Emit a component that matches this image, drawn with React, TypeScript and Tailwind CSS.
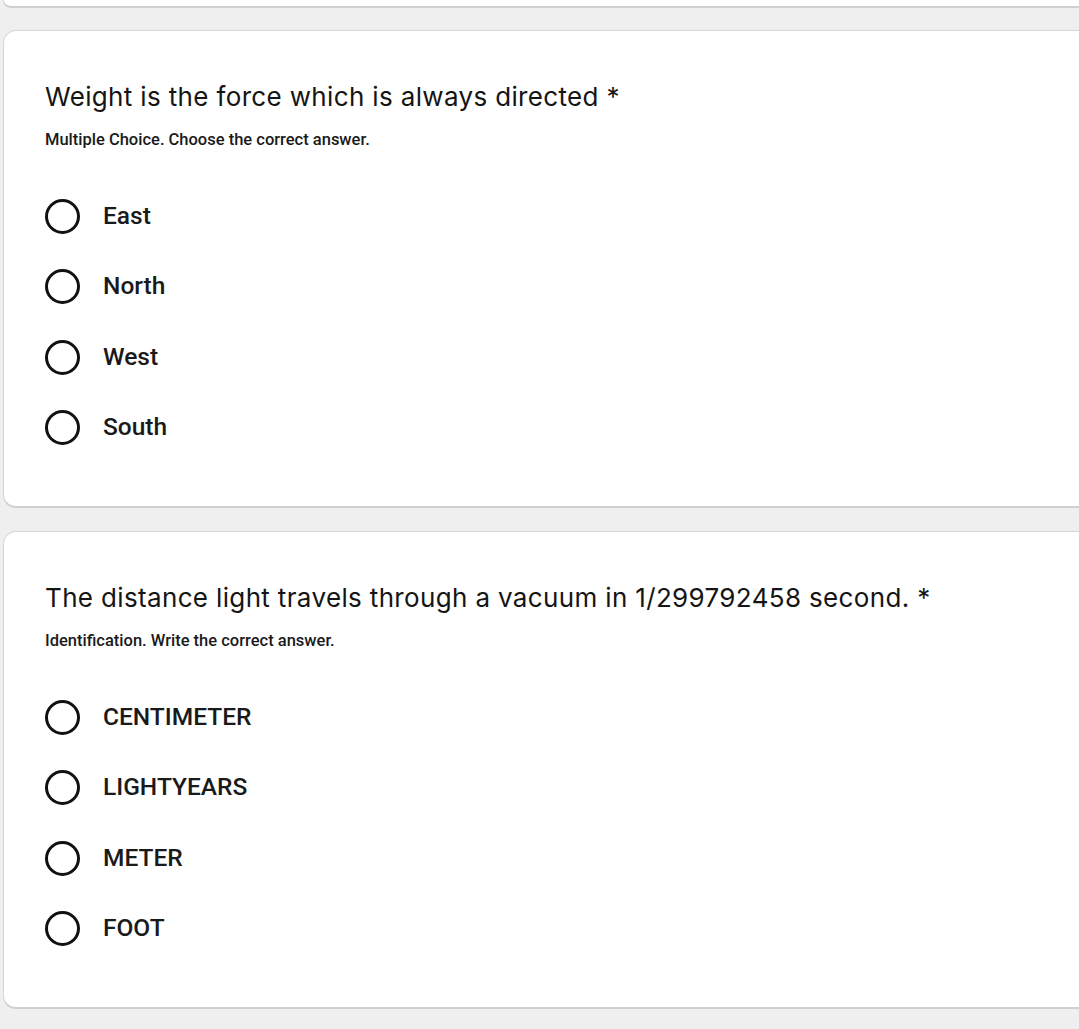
import React from "react";

type Q = { title: string; subtitle: string; options: string[] };

const questions: Q[] = [
  {
    title: "Weight is the force which is always directed",
    subtitle: "Multiple Choice. Choose the correct answer.",
    options: ["East", "North", "West", "South"],
  },
  {
    title: "The distance light travels through a vacuum in 1/299792458 second.",
    subtitle: "Identification. Write the correct answer.",
    options: ["CENTIMETER", "LIGHTYEARS", "METER", "FOOT"],
  },
];

function Card({ q }: { q: Q }) {
  return (
    <div className="bg-white border border-[#d6d6d6] border-b-[2px] border-b-[#cfcfcf] rounded-[13px] pt-[50px] pb-[43px] pl-[41px]">
      <div
        className="text-[26px] leading-[32px] text-[#151515] tracking-[0.35px]"
        style={{ fontFamily: "Inter, 'Noto Sans', sans-serif" }}
      >
        {q.title} <span>*</span>
      </div>
      <div
        className="mt-[15px] text-[16.5px] leading-[24px] font-medium text-[#1a1a1a]"
        style={{ fontFamily: "Roboto, 'Liberation Sans', sans-serif" }}
      >
        {q.subtitle}
      </div>
      <div className="mt-[29px] flex flex-col">
        {q.options.map((o) => (
          <div key={o} className="h-[70.5px] flex items-center">
            <div className="w-[35px] h-[35px] rounded-full border-[3.5px] border-[#111111] shrink-0" />
            <div
              className="ml-[23px] text-[24.5px] font-medium text-[#1a1a1a]"
              style={{ fontFamily: "Roboto, 'Liberation Sans', sans-serif" }}
            >
              {o}
            </div>
          </div>
        ))}
      </div>
    </div>
  );
}

export default function App() {
  return (
    <div className="min-h-screen bg-[#efefef] overflow-hidden">
      <div className="ml-[3px] w-[1110px] flex flex-col pb-[40px]">
        <div className="h-[8px] bg-white border border-t-0 border-[#d6d6d6] border-b-[2px] border-b-[#cfcfcf] rounded-b-[13px]" />
        <div className="mt-[22px] flex flex-col gap-[23px]">
          {questions.map((q) => (
            <Card key={q.title} q={q} />
          ))}
          <div className="h-[40px] bg-white border border-b-0 border-[#d6d6d6] rounded-t-[13px]" />
        </div>
      </div>
    </div>
  );
}
